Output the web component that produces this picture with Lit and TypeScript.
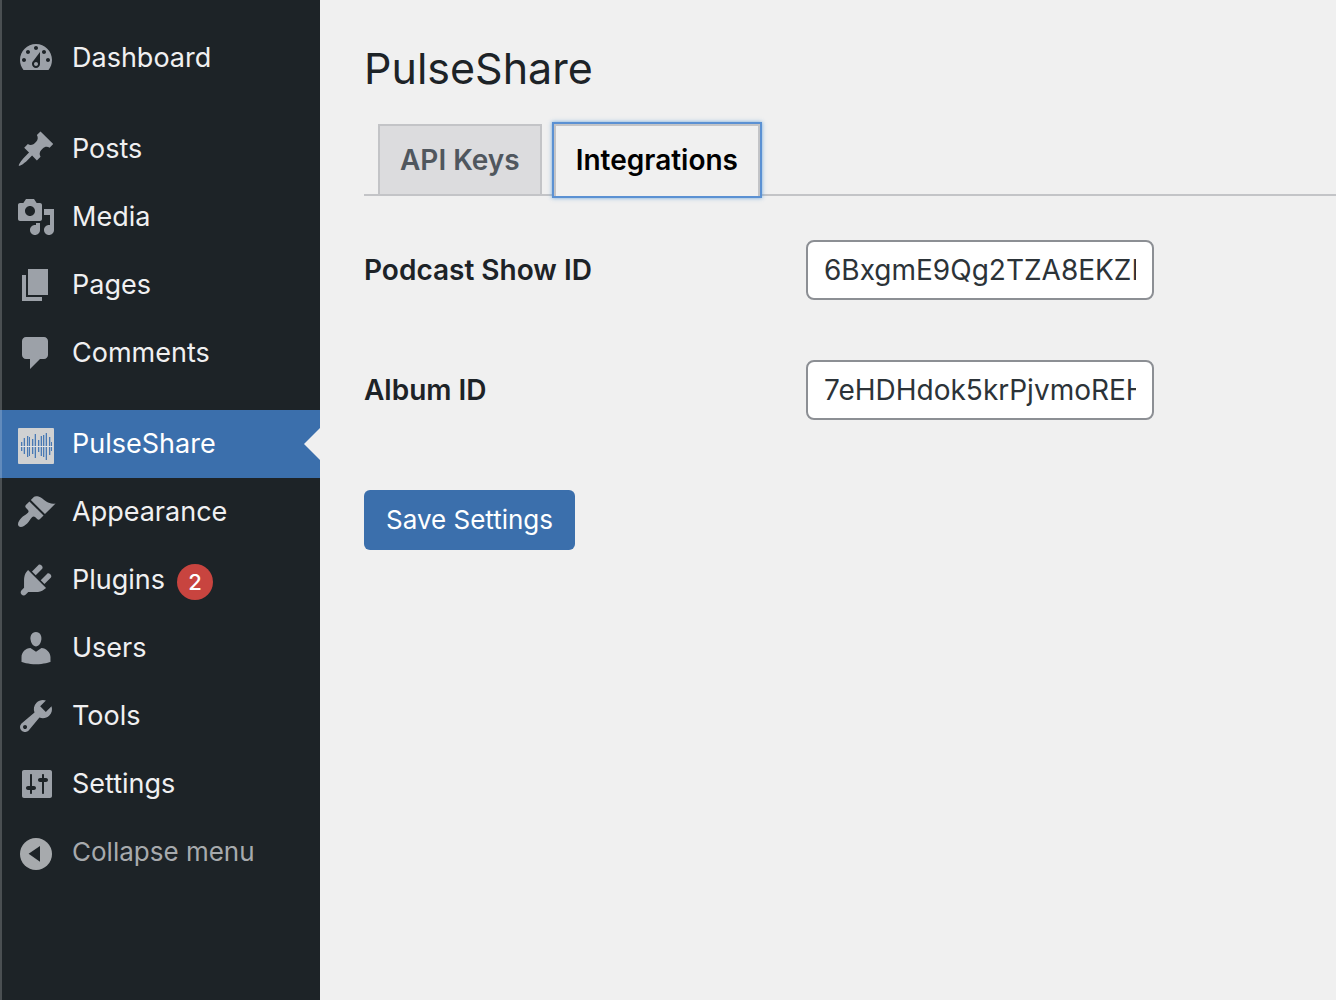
import { LitElement, html, svg, css, nothing } from "lit";
import { customElement, state } from "lit/decorators.js";
import { classMap } from "lit/directives/class-map.js";

interface MenuItem {
  label: string;
  icon: unknown;
  current?: boolean;
  badge?: number;
}

const glyph = (d: string) => svg`<path fill="currentColor" fill-rule="evenodd" d=${d} />`;

// Waveform bars as [x, top, bottom] on the 36-unit tile.
const WAVE: Array<[number, number, number]> = [
  [3, 14, 23],
  [6, 10, 26],
  [9, 8, 29],
  [11, 9, 28],
  [14, 11, 26],
  [17, 6, 30],
  [20, 12, 24],
  [23, 8, 28],
  [25, 7, 29],
  [28, 5, 32],
  [31, 9, 27],
  [33, 14, 23],
];

const waveIcon = svg`
  <g transform="translate(1 2) scale(0.5)">
    <rect width="36" height="36" rx="1" fill="#d0d1d2" />
    ${WAVE.map(
      ([x, top, bottom], i) => svg`
        <rect x=${i % 2 ? x - 1 : x + 1} y=${top} width="1" height=${bottom - top} fill="#a3b7cd" />
        <rect x=${x} y=${top} width="1" height=${bottom - top} fill="#4a79b3" />`
    )}
    <rect x="2" y="18" width="33" height="1" fill="#dfe2e6" />
  </g>`;

const collapseIcon = svg`
  <circle cx="10" cy="11" r="8" fill="currentColor" />
  <path d="M6.3 10.9 12 7v7.9z" fill="#1d2327" />`;

const ICONS = {
  dashboard: glyph(
    "M3.76 16h12.48c1.1-1.37 1.76-3.11 1.76-5 0-4.42-3.58-8-8-8s-8 3.58-8 8c0 1.89.66 3.63 1.76 5zM10 4c.55 0 1 .45 1 1s-.45 1-1 1-1-.45-1-1 .45-1 1-1zM6 6c.55 0 1 .45 1 1s-.45 1-1 1-1-.45-1-1 .45-1 1-1zm8 0c.55 0 1 .45 1 1s-.45 1-1 1-1-.45-1-1 .45-1 1-1zm-5.37 5.55L12 7v6c0 1.1-.9 2-2 2s-2-.9-2-2c0-.57.24-1.08.63-1.45zM4 10c.55 0 1 .45 1 1s-.45 1-1 1-1-.45-1-1 .45-1 1-1zm12 0c.55 0 1 .45 1 1s-.45 1-1 1-1-.45-1-1 .45-1 1-1zm-5 3c0-.55-.45-1-1-1s-1 .45-1 1 .45 1 1 1 1-.45 1-1z"
  ),
  posts: glyph(
    "M10.44 3.02l1.82-1.82 6.36 6.35-1.83 1.82c-1.05-.68-2.48-.57-3.41.36l-.75.75c-.92.93-1.04 2.35-.35 3.41l-1.83 1.82-2.41-2.41-2.8 2.79c-.42.42-3.38 2.71-3.8 2.29s1.86-3.39 2.28-3.81l2.79-2.79L4.1 9.36l1.83-1.82c1.05.69 2.48.57 3.4-.36l.75-.75c.93-.92 1.05-2.35.36-3.41z"
  ),
  media: glyph(
    "M13 11V4c0-.55-.45-1-1-1h-1.67L9 1H5L3.67 3H2c-.55 0-1 .45-1 1v7c0 .55.45 1 1 1h10c.55 0 1-.45 1-1zM7 4.5c1.38 0 2.5 1.12 2.5 2.5S8.38 9.5 7 9.5 4.5 8.38 4.5 7 5.62 4.5 7 4.5zM14 6h5v10.5c0 1.38-1.12 2.5-2.5 2.5S14 17.88 14 16.5s1.12-2.5 2.5-2.5c.17 0 .34.02.5.05V9h-3V6zm-4 8.05V13h2v3.5c0 1.38-1.12 2.5-2.5 2.5S7 17.88 7 16.5 8.12 14 9.5 14c.17 0 .34.02.5.05z"
  ),
  pages: glyph("M6 15V2h10v13H6zm-1 1h8v2H3V5h2v11z"),
  comments: glyph(
    "M5 2h9c1.1 0 2 .9 2 2v7c0 1.1-.9 2-2 2h-2l-5 5v-5H5c-1.1 0-2-.9-2-2V4c0-1.1.9-2 2-2z"
  ),
  appearance: glyph(
    "M14.48 11.06L7.41 3.99l1.5-1.5c.5-.56 2.3-.47 3.51.32 1.21.8 1.43 1.28 2.91 2.1 1.18.64 2.45 1.26 4.45.85zm-.71.71L6.7 4.7 4.93 6.47c-.39.39-.39 1.02 0 1.41l1.06 1.06c.39.39.39 1.03 0 1.42-.6.6-1.43 1.11-2.21 1.69-.35.26-.7.53-1.01.84C1.43 14.23.4 16.08 1.4 17.07c.99 1 2.84-.03 4.18-1.36.31-.31.58-.66.85-1.02.57-.78 1.08-1.61 1.69-2.21.39-.39 1.02-.39 1.41 0l1.06 1.06c.39.39 1.02.39 1.41 0z"
  ),
  plugins: glyph(
    "M13.11 4.36L9.87 7.6 8 5.73l3.24-3.24c.35-.34 1.05-.2 1.56.32.52.51.66 1.21.31 1.55zm-8 1.77l.91-1.12 9.01 9.01-1.19.84c-.71.71-2.63 1.16-3.82 1.16H6.14L4.9 17.26c-.59.59-1.54.59-2.12 0-.59-.58-.59-1.53 0-2.12l1.24-1.24v-3.88c0-1.13.4-3.19 1.09-3.89zm7.26 3.97l3.24-3.24c.34-.35 1.04-.21 1.55.31.52.51.66 1.21.31 1.55l-3.24 3.25z"
  ),
  users: glyph(
    "M10 9.25c-2.27 0-2.73-3.44-2.73-3.44C7 4.02 7.82 2 9.97 2c2.16 0 2.98 2.02 2.71 3.81 0 0-.41 3.44-2.68 3.44zm0 2.57L12.72 10c2.39 0 4.52 2.33 4.52 4.53v2.49s-3.65 1.13-7.24 1.13c-3.65 0-7.24-1.13-7.24-1.13v-2.49c0-2.25 1.94-4.48 4.47-4.48z"
  ),
  tools: glyph(
    "M16.68 9.77c-1.34 1.34-3.3 1.67-4.95.99l-5.41 6.52c-.99.99-2.59.99-3.58 0s-.99-2.59 0-3.57l6.52-5.42c-.68-1.65-.35-3.61.99-4.95 1.28-1.28 3.12-1.62 4.72-1.06l-2.89 2.89 2.82 2.82 2.86-2.87c.53 1.58.18 3.39-1.08 4.65zM3.81 16.21c.4.39 1.04.39 1.43 0 .4-.4.4-1.04 0-1.43-.39-.4-1.03-.4-1.43 0-.39.39-.39 1.03 0 1.43z"
  ),
  settings: glyph(
    "M18 16V4c0-.55-.45-1-1-1H4c-.55 0-1 .45-1 1v12c0 .55.45 1 1 1h13c.55 0 1-.45 1-1zM8 11h1c.55 0 1 .45 1 1s-.45 1-1 1H8v1.5c0 .28-.22.5-.5.5s-.5-.22-.5-.5V13H6c-.55 0-1-.45-1-1s.45-1 1-1h1V5.5c0-.28.22-.5.5-.5s.5.22.5.5V11zm5-2h-1c-.55 0-1-.45-1-1s.45-1 1-1h1V5.5c0-.28.22-.5.5-.5s.5.22.5.5V7h1c.55 0 1 .45 1 1s-.45 1-1 1h-1v5.5c0 .28-.22.5-.5.5s-.5-.22-.5-.5V9z"
  ),
};

const MENU: MenuItem[][] = [
  [{ label: "Dashboard", icon: ICONS.dashboard }],
  [
    { label: "Posts", icon: ICONS.posts },
    { label: "Media", icon: ICONS.media },
    { label: "Pages", icon: ICONS.pages },
    { label: "Comments", icon: ICONS.comments },
  ],
  [
    { label: "PulseShare", icon: waveIcon, current: true },
    { label: "Appearance", icon: ICONS.appearance },
    { label: "Plugins", icon: ICONS.plugins, badge: 2 },
    { label: "Users", icon: ICONS.users },
    { label: "Tools", icon: ICONS.tools },
    { label: "Settings", icon: ICONS.settings },
  ],
];

const icon = (content: unknown) =>
  html`<svg class="icon" viewBox="0 0 20 20" aria-hidden="true">${content}</svg>`;

@customElement("admin-menu")
export class AdminMenu extends LitElement {
  static styles = css`
    :host {
      display: block;
      position: relative;
      padding: 24px 0;
      box-sizing: border-box;
      background: #1d2327;
      font-size: 27px;
    }
    .edge {
      position: absolute;
      inset: 0 auto 0 0;
      width: 2px;
      background: rgba(255, 255, 255, 0.2);
      pointer-events: none;
    }
    .groups {
      display: flex;
      flex-direction: column;
      gap: 23px;
    }
    .group {
      margin: 0;
      padding: 0;
      list-style: none;
    }
    .item {
      position: relative;
      display: flex;
      align-items: center;
      gap: 16px;
      box-sizing: border-box;
      width: 100%;
      min-height: 68px;
      padding: 0 16px;
      border: 0;
      background: none;
      color: #f0f0f1;
      font: inherit;
      text-align: left;
      text-decoration: none;
      cursor: pointer;
    }
    .icon {
      flex: none;
      width: 40px;
      height: 40px;
      color: #9ca1a8;
    }
    .current {
      background: #3b6fac;
      color: #fff;
    }
    .current::after {
      content: "";
      position: absolute;
      right: 0;
      top: 50%;
      margin-top: -16px;
      border: 16px solid transparent;
      border-left-width: 0;
      border-right-color: #f0f0f0;
    }
    .text {
      display: flex;
      align-items: center;
      gap: 12px;
    }
    .badge {
      min-width: 36px;
      border-radius: 18px;
      margin-top: 4px;
      background: #c8443f;
      color: #fff;
      font-size: 22px;
      font-weight: 500;
      line-height: 36px;
      text-align: center;
    }
    .collapse {
      font-size: 26px;
    }
    .collapse,
    .collapse .icon {
      color: #a7aaad;
    }
  `;

  render() {
    return html`
      <nav class="groups" aria-label="Main menu">
        ${MENU.map(
          (group, i) => html`<ul class="group">
            ${group.map(
              (m) => html`<li>
                <a
                  class=${classMap({ item: true, current: !!m.current })}
                  href="#"
                  aria-current=${m.current ? "page" : nothing}
                >
                  ${icon(m.icon)}
                  <span class="text"
                    >${m.label}${m.badge ? html`<span class="badge">${m.badge}</span>` : nothing}</span
                  >
                </a>
              </li>`
            )}
            ${i === MENU.length - 1
              ? html`<li>
                  <button type="button" class="item collapse">
                    ${icon(collapseIcon)}<span class="text">Collapse menu</span>
                  </button>
                </li>`
              : nothing}
          </ul>`
        )}
      </nav>
      <div class="edge"></div>
    `;
  }
}

@customElement("app-root")
export class AppRoot extends LitElement {
  static styles = css`
    :host {
      display: grid;
      grid-template-columns: 320px minmax(0, 1fr);
      min-height: 100vh;
      background: #f0f0f0;
      color: #1d2327;
      font-family: Inter, "Liberation Sans", sans-serif;
      font-size: 28px;
      line-height: 36px;
    }
    .main {
      padding: 38px 0 40px 44px;
    }
    .title {
      margin: 0;
      font-size: 43px;
      font-weight: 400;
      line-height: 60px;
    }
    .tabs {
      display: flex;
      gap: 12px;
      margin-top: 26px;
      padding-left: 14px;
      border-bottom: 2px solid #c3c4c7;
    }
    .tab {
      padding: 16px 20px;
      border: 2px solid #c3c4c7;
      border-bottom: 0;
      background: #dcdcde;
      color: #50575e;
      font-weight: 600;
      text-decoration: none;
    }
    .selected {
      margin-bottom: -2px;
      padding-bottom: 18px;
      background: #f0f0f0;
      color: #000;
      outline: 2px solid #5b91d3;
      box-shadow: 0 0 4px 2px rgba(79, 148, 212, 0.8);
    }
    .form {
      display: flex;
      flex-direction: column;
      align-items: stretch;
      gap: 60px;
      padding-top: 44px;
    }
    .row {
      display: grid;
      grid-template-columns: 442px minmax(0, 348px);
      align-items: center;
    }
    .label {
      font-weight: 600;
    }
    .field {
      box-sizing: border-box;
      width: 100%;
      height: 60px;
      padding: 0 16px;
      border: 2px solid #8c8f94;
      border-radius: 8px;
      background: #fff;
      color: #2c3338;
      font: inherit;
    }
    .save {
      align-self: flex-start;
      margin-top: 10px;
      padding: 0 22px;
      border: 0;
      border-radius: 6px;
      background: #3b6fac;
      color: #fff;
      font: inherit;
      font-size: 26px;
      line-height: 60px;
      cursor: pointer;
    }
  `;

  @state() private showId = "6BxgmE9Qg2TZA8EKZL";
  @state() private albumId = "7eHDHdok5krPjvmoREH";

  private setShowId(e: Event) {
    this.showId = (e.target as HTMLInputElement).value;
  }

  private setAlbumId(e: Event) {
    this.albumId = (e.target as HTMLInputElement).value;
  }

  render() {
    return html`
      <admin-menu></admin-menu>
      <main class="main">
        <h1 class="title">PulseShare</h1>
        <nav class="tabs" aria-label="Settings sections">
          <a class="tab" href="#keys">API Keys</a>
          <a class="tab selected" href="#integrations" aria-current="page">Integrations</a>
        </nav>
        <form class="form" @submit=${(e: Event) => e.preventDefault()}>
          <div class="row">
            <label class="label" for="show">Podcast Show ID</label>
            <input class="field" id="show" type="text" .value=${this.showId} @input=${this.setShowId} />
          </div>
          <div class="row">
            <label class="label" for="album">Album ID</label>
            <input class="field" id="album" type="text" .value=${this.albumId} @input=${this.setAlbumId} />
          </div>
          <button class="save" type="submit">Save Settings</button>
        </form>
      </main>
    `;
  }
}
